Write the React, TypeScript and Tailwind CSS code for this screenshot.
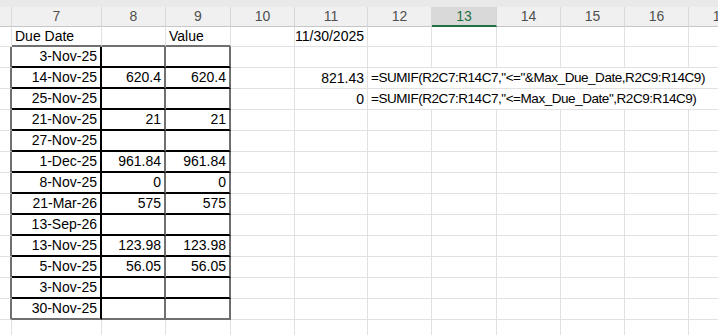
import type { ReactNode } from "react";

type Row = { date: string; amount: string; value: string };

const rows: Row[] = [
  { date: "3-Nov-25", amount: "", value: "" },
  { date: "14-Nov-25", amount: "620.4", value: "620.4" },
  { date: "25-Nov-25", amount: "", value: "" },
  { date: "21-Nov-25", amount: "21", value: "21" },
  { date: "27-Nov-25", amount: "", value: "" },
  { date: "1-Dec-25", amount: "961.84", value: "961.84" },
  { date: "8-Nov-25", amount: "0", value: "0" },
  { date: "21-Mar-26", amount: "575", value: "575" },
  { date: "13-Sep-26", amount: "", value: "" },
  { date: "13-Nov-25", amount: "123.98", value: "123.98" },
  { date: "5-Nov-25", amount: "56.05", value: "56.05" },
  { date: "3-Nov-25", amount: "", value: "" },
  { date: "30-Nov-25", amount: "", value: "" },
];

// side results in column 11 and the formula text spilling from column 12
const side: Record<number, { result: string; formula: string }> = {
  1: { result: "821.43", formula: '=SUMIF(R2C7:R14C7,"<="&Max_Due_Date,R2C9:R14C9)' },
  2: { result: "0", formula: '=SUMIF(R2C7:R14C7,"<=Max_Due_Date",R2C9:R14C9)' },
};

const headers = ["", "7", "8", "9", "10", "11", "12", "13", "14", "15", "16", "17"];

function Cell({ className = "", children }: { className?: string; children?: ReactNode }) {
  return (
    <div
      className={`flex items-center overflow-visible whitespace-nowrap border-b border-r border-[#e1e1e1] px-[3px] ${className}`}
    >
      {children}
    </div>
  );
}

function Blank({ count, className = "" }: { count: number; className?: string }) {
  return (
    <>
      {Array.from({ length: count }).map((_, i) => (
        <Cell key={i} className={className} />
      ))}
    </>
  );
}

export default function App() {
  return (
    <div className="h-[335px] w-[718px] overflow-hidden bg-white font-['Liberation_Sans',Arial,sans-serif] text-[14px] text-black">
      <div className="h-[7px] bg-[#e9e9e9]" />
      <div className="grid w-[753px] grid-cols-[12px_90px_64px_65px_64px_73px_64px_65px_64px_64px_64px_64px]">
        {/* column headers */}
        {headers.map((h) =>
          h === "13" ? (
            <div
              key={h}
              className="flex h-[20px] items-center justify-center border-b-2 border-r border-b-[#1e7145] border-r-[#d4d4d4] bg-[#d9d9d9] text-[#1e7145]"
            >
              {h}
            </div>
          ) : (
            <div
              key={h || "blank"}
              className="flex h-[20px] items-center justify-center border-b border-r border-b-[#c6c6c6] border-r-[#d9d9d9] bg-[#f0f0f0] text-[#505050]"
            >
              {h}
            </div>
          )
        )}

        {/* row 1 */}
        <Cell className="h-[20px]" />
        <Cell className="h-[20px] border-b-2 border-b-[#707070]">Due Date</Cell>
        <Cell className="h-[20px] border-b-2 border-b-[#707070]" />
        <Cell className="h-[20px] border-b-2 border-b-[#707070]">Value</Cell>
        <Cell className="h-[20px]" />
        <Cell className="h-[20px] justify-end">11/30/2025</Cell>
        <Blank count={6} className="h-[20px]" />

        {rows.map((r, i) => {
          const last = i === rows.length - 1;
          const bottom = last ? "border-b-2 border-b-[#707070]" : "border-b-2 border-b-black";
          const extra = side[i];
          return (
            <div key={i} className="contents">
              <Cell className="h-[21px] border-r-2 border-r-[#707070]" />
              <Cell className={`h-[21px] justify-end border-r-2 border-r-black ${bottom}`}>{r.date}</Cell>
              <Cell className={`h-[21px] justify-end border-r-2 border-r-[#707070] ${bottom}`}>{r.amount}</Cell>
              <Cell className={`h-[21px] justify-end border-r-2 border-r-[#707070] ${bottom}`}>{r.value}</Cell>
              <Cell className="h-[21px]" />
              {extra ? (
                <>
                  <Cell className="h-[21px] justify-end">{extra.result}</Cell>
                  <Cell className="col-span-6 h-[21px] text-[13.5px] tracking-[-0.45px]">{extra.formula}</Cell>
                </>
              ) : (
                <Blank count={7} className="h-[21px]" />
              )}
            </div>
          );
        })}

        {/* partial row below the table */}
        <Blank count={12} className="h-[21px]" />
      </div>
    </div>
  );
}
